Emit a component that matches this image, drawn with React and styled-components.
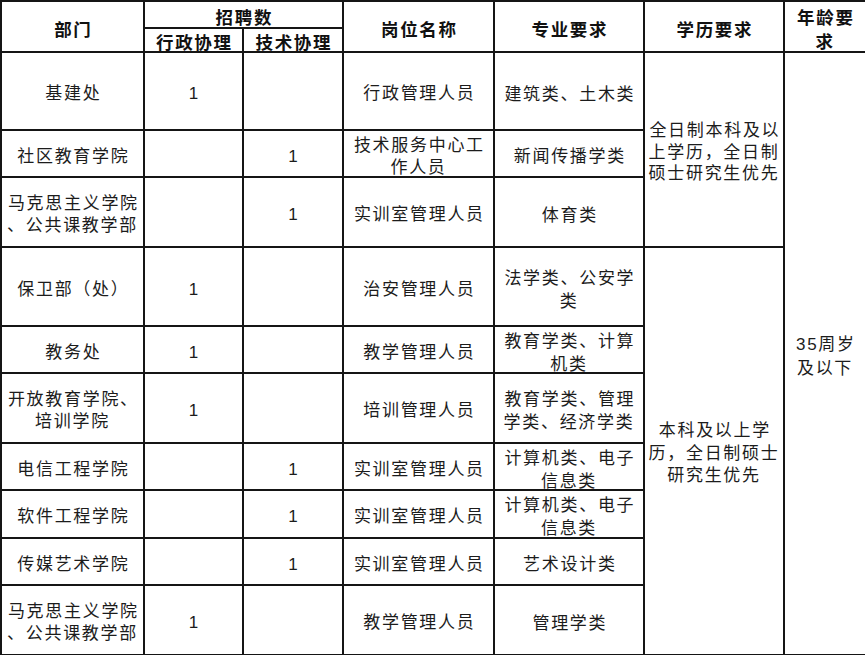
import React from "react";
import styled, { createGlobalStyle } from "styled-components";

const Global = createGlobalStyle`
  html, body { margin: 0; padding: 0; background: #fff; }
  body { font-family: "Liberation Sans", "Noto Sans CJK SC", sans-serif; color: #1c1c1c; }
`;

const Sheet = styled.table`
  border-collapse: collapse;
  table-layout: fixed;
  width: 865px;
  margin: 0;
`;

const Col = styled.col`
  width: ${(p) => p.$w}px;
`;

const Row = styled.tr`
  height: ${(p) => p.$h}px;
`;

const Cell = styled.td`
  border: 2px solid #151515;
  padding: 0;
  text-align: center;
  vertical-align: middle;
  font-size: 17px;
  letter-spacing: 1.7px;
  text-indent: 1.7px;
  font-weight: 400;
  color: #1c1c1c;
  overflow: hidden;
  white-space: nowrap;
`;

const HeadCell = styled(Cell).attrs({ as: "th" })`
  font-weight: 700;
  font-size: 17.5px;
  color: #111;
`;

const Text = styled.div`
  line-height: ${(p) => p.$lh || 22}px;
  margin: 2px 0 -4px;
`;

const Lines = ({ text, lh }) => (
  <Text $lh={lh}>
    {text.split("\n").map((t, i, a) => (
      <React.Fragment key={i}>
        {t}
        {i < a.length - 1 && <br />}
      </React.Fragment>
    ))}
  </Text>
);

const rows = [
  { h: 78, dept: "基建处", a: "1", b: "", post: "行政管理人员", major: "建筑类、土木类" },
  { h: 47, dept: "社区教育学院", a: "", b: "1", post: "技术服务中心工\n作人员", major: "新闻传播学类" },
  { h: 70, dept: "马克思主义学院\n、公共课教学部", a: "", b: "1", post: "实训室管理人员", major: "体育类" },
  { h: 79, dept: "保卫部（处）", a: "1", b: "", post: "治安管理人员", major: "法学类、公安学\n类" },
  { h: 47, dept: "教务处", a: "1", b: "", post: "教学管理人员", major: "教育学类、计算\n机类" },
  { h: 70, dept: "开放教育学院、\n培训学院", a: "1", b: "", post: "培训管理人员", major: "教育学类、管理\n学类、经济学类" },
  { h: 47, dept: "电信工程学院", a: "", b: "1", post: "实训室管理人员", major: "计算机类、电子\n信息类" },
  { h: 48, dept: "软件工程学院", a: "", b: "1", post: "实训室管理人员", major: "计算机类、电子\n信息类" },
  { h: 47, dept: "传媒艺术学院", a: "", b: "1", post: "实训室管理人员", major: "艺术设计类" },
  { h: 70, dept: "马克思主义学院\n、公共课教学部", a: "1", b: "", post: "教学管理人员", major: "管理学类" },
];

const widths = [143, 99, 100, 151, 150, 140, 82];

export default function App() {
  return (
    <>
      <Global />
      <Sheet>
        <colgroup>
          {widths.map((w, i) => (
            <Col key={i} $w={w} />
          ))}
        </colgroup>
        <thead>
          <Row $h={27}>
            <HeadCell rowSpan={2}>
              <Lines text="部门" />
            </HeadCell>
            <HeadCell colSpan={2}>
              <Lines text="招聘数" />
            </HeadCell>
            <HeadCell rowSpan={2}>
              <Lines text="岗位名称" />
            </HeadCell>
            <HeadCell rowSpan={2}>
              <Lines text="专业要求" />
            </HeadCell>
            <HeadCell rowSpan={2}>
              <Lines text="学历要求" />
            </HeadCell>
            <HeadCell rowSpan={2}>
              <Lines text={"年龄要\n求"} lh={24} />
            </HeadCell>
          </Row>
          <Row $h={24}>
            <HeadCell>
              <Lines text="行政协理" />
            </HeadCell>
            <HeadCell>
              <Lines text="技术协理" />
            </HeadCell>
          </Row>
        </thead>
        <tbody>
          {rows.map((r, i) => (
            <Row key={i} $h={r.h}>
              <Cell>
                <Lines text={r.dept} />
              </Cell>
              <Cell>
                <Lines text={r.a} />
              </Cell>
              <Cell>
                <Lines text={r.b} />
              </Cell>
              <Cell>
                <Lines text={r.post} />
              </Cell>
              <Cell>
                <Lines text={r.major} lh={23} />
              </Cell>
              {i === 0 && (
                <Cell rowSpan={3}>
                  <Lines text={"全日制本科及以\n上学历，全日制\n硕士研究生优先"} lh={21.5} />
                </Cell>
              )}
              {i === 3 && (
                <Cell rowSpan={7}>
                  <Lines text={"本科及以上学\n历，全日制硕士\n研究生优先"} lh={22.5} />
                </Cell>
              )}
              {i === 0 && (
                <Cell rowSpan={10}>
                  <Lines text={"35周岁\n及以下"} lh={23.5} />
                </Cell>
              )}
            </Row>
          ))}
        </tbody>
      </Sheet>
    </>
  );
}
